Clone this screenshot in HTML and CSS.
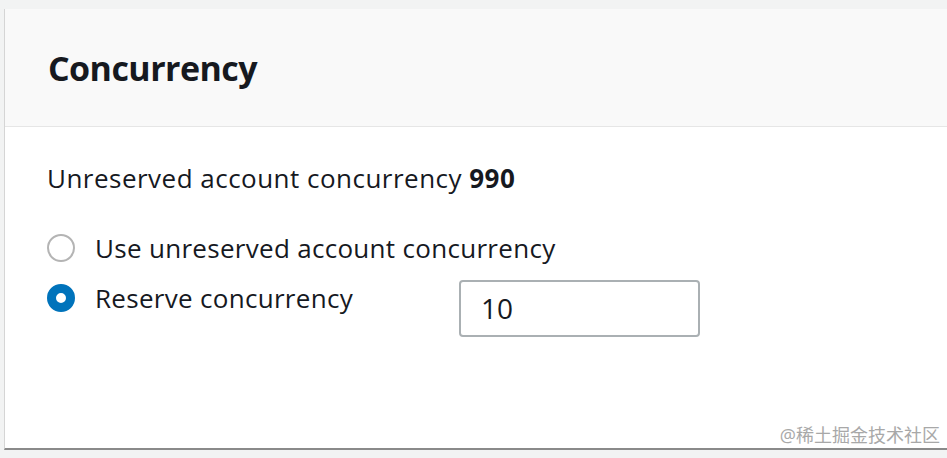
FILE: index.html
```html
<!DOCTYPE html>
<html>
<head>
<meta charset="utf-8">
<link rel="stylesheet" href="styles.css">
</head>
<body>
<div class="page">
  <section class="panel">
    <header class="panel-head"><h2 class="title">Concurrency</h2></header>
    <div class="panel-body">
      <p class="summary">Unreserved account concurrency <b>990</b></p>
      <div class="options">
        <label class="option">
          <span class="radio"></span>
          <span class="label">Use unreserved account concurrency</span>
        </label>
        <div class="option">
          <span class="radio checked"></span>
          <span class="label label-fixed">Reserve concurrency</span>
          <div class="input">10</div>
        </div>
      </div>
      <div class="watermark">@稀土掘金技术社区</div>
    </div>
  </section>
</div>
</body>
</html>
```
FILE: styles.css
```css
html, body { margin: 0; padding: 0; }
body {
  background: #f2f3f3;
  font-family: "Open Sans", "Noto Sans CJK SC", sans-serif;
  color: #16191f;
  width: 947px;
  height: 458px;
  overflow: hidden;
}
.page { padding: 9px 0 0 4px; }
.panel {
  background: #fff;
  border-left: 1px solid #d5d5d5;
  border-bottom: 2px solid #8a8a8a;
  height: 441px;
  box-sizing: border-box;
  display: flex;
  flex-direction: column;
}
.panel-head {
  background: #f9f9f9;
  border-bottom: 1px solid #e6e6e6;
  height: 118px;
  box-sizing: border-box;
  padding: 39px 0 0 43px;
}
.title {
  margin: 0;
  font-size: 34px;
  line-height: 40px;
  font-weight: 700;
  letter-spacing: -0.55px;
}
.panel-body {
  flex: 1;
  padding: 0 0 0 42px;
  position: relative;
}
.summary {
  margin: 33px 0 0;
  font-size: 26px;
  line-height: 36px;
  letter-spacing: 0.48px;
}
.summary b { font-weight: 700; }
.options {
  margin-top: 34px;
  display: flex;
  flex-direction: column;
  gap: 14px;
}
.option {
  display: flex;
  align-items: flex-start;
  height: 36px;
}
.radio {
  width: 28px;
  height: 28px;
  box-sizing: border-box;
  border: 2px solid #b4b4b4;
  border-radius: 50%;
  margin: 4px 20px 0 0;
  flex: none;
}
.radio.checked { border: 9px solid #0073bb; }
.label { font-size: 26px; line-height: 36px; letter-spacing: 0.3px; }
.label-fixed { width: 364px; }
.input {
  width: 241px;
  height: 57px;
  box-sizing: border-box;
  border: 2px solid #aab0b3;
  border-radius: 4px;
  font-size: 28px;
  line-height: 53px;
  padding-left: 20px;
  margin-top: 0;
}
.watermark {
  position: absolute;
  right: 7px;
  bottom: 1px;
  font-size: 18px;
  color: #a8a8a8;
}
```
